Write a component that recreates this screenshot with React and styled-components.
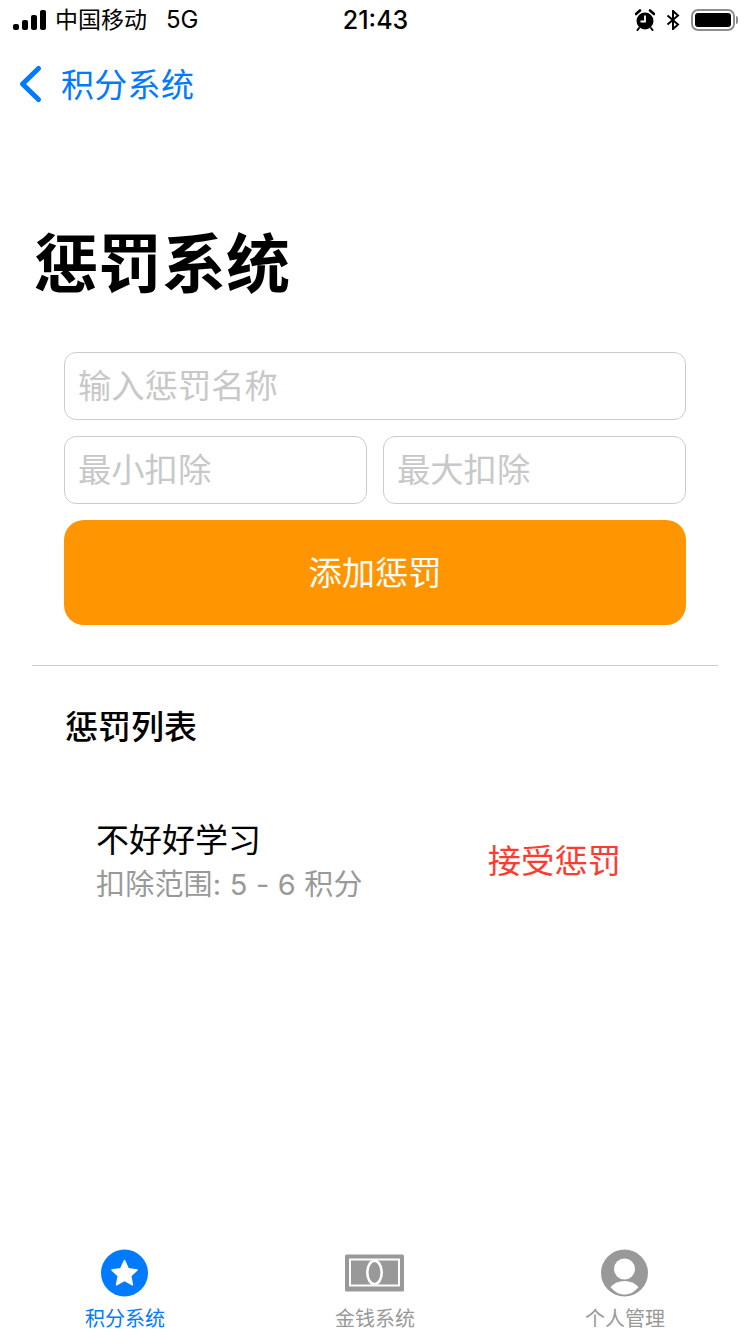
import React from 'react'
import styled, { createGlobalStyle } from 'styled-components'

const GlobalStyle = createGlobalStyle`
  html, body {
    margin: 0;
    padding: 0;
    background: #ffffff;
  }
  body {
    font-family: 'Inter', 'Noto Sans CJK SC', sans-serif;
  }
  * {
    box-sizing: border-box;
  }
`

const Page = styled.div`
  width: 750px;
  height: 1334px;
  background: #ffffff;
  display: flex;
  flex-direction: column;
  overflow: hidden;
`

const StatusBar = styled.div`
  height: 40px;
  padding: 0 12px 0 13px;
  display: grid;
  grid-template-columns: 1fr auto 1fr;
  align-items: center;
  color: #000;
`

const StatusLeft = styled.div`
  display: flex;
  align-items: center;
  font-size: 23px;
  line-height: 40px;
`

const StatusCarrier = styled.span`
  margin-left: 8px;
`

const StatusNetwork = styled.span`
  margin-left: 19px;
  font-size: 24px;
`

const StatusTime = styled.div`
  font-size: 25px;
  font-weight: 500;
`

const StatusRight = styled.div`
  display: flex;
  justify-content: flex-end;
  align-items: center;
  gap: 11px;
`

const BatteryBody = styled.div`
  width: 44px;
  height: 22px;
  border: 2px solid #8e8e8e;
  border-radius: 7px;
  padding: 2px;
`

const BatteryFill = styled.div`
  height: 100%;
  background: #000;
  border-radius: 3px;
`

const BatteryWrap = styled.div`
  display: flex;
  align-items: center;
  gap: 1px;
`

const BatteryCap = styled.div`
  width: 2px;
  height: 8px;
  background: #8e8e8e;
  border-radius: 0 2px 2px 0;
`

const NavBar = styled.div`
  height: 88px;
  padding: 0 0 0 18px;
  display: flex;
  align-items: center;
  gap: 17px;
  color: #007aff;
  font-size: 33px;
  line-height: 46px;
  letter-spacing: 0.3px;
`

const NavTitle = styled.span`
  padding-top: 2px;
`

const Title = styled.h1`
  margin: 86px 0 0 34px;
  font-size: 64px;
  line-height: 100px;
  font-weight: 700;
  color: #000;
`

const Form = styled.div`
  margin: 38px 64px 0;
  display: flex;
  flex-direction: column;
  gap: 16px;
`

const InputRow = styled.div`
  display: flex;
  gap: 16px;
`

const Input = styled.input`
  flex: 1 1 auto;
  width: 100%;
  min-width: 0;
  height: 68px;
  padding: 0 13px;
  border: 1px solid #cccccc;
  border-radius: 12px;
  background: #fff;
  font-family: inherit;
  font-size: 33.3px;
  outline: none;
  &::placeholder {
    color: #c8c8c8;
    opacity: 1;
  }
`

const AddButton = styled.button`
  height: 105px;
  padding: 0 0 5px;
  border: none;
  border-radius: 20px;
  background: #ff9500;
  color: #fff;
  font-family: inherit;
  font-size: 33.3px;
`

const Divider = styled.div`
  height: 1px;
  margin: 40px 32px 0;
  background: #cccccc;
`

const SectionTitle = styled.h2`
  margin: 36px 0 0 65px;
  font-size: 33px;
  line-height: 50px;
  font-weight: 500;
  color: #000;
`

const ListItem = styled.div`
  margin: 64px 129px 0 96px;
  display: flex;
  justify-content: space-between;
  align-items: center;
`

const ItemInfo = styled.div`
  display: flex;
  flex-direction: column;
`

const ItemName = styled.div`
  font-size: 33px;
  line-height: 49px;
  color: #000;
`

const ItemRange = styled.div`
  font-size: 29px;
  line-height: 40px;
  color: #999999;
  letter-spacing: 0.2px;
`

const AcceptButton = styled.button`
  margin-bottom: 5px;
  border: none;
  background: none;
  padding: 0;
  color: #ff3b30;
  font-family: inherit;
  font-size: 33.3px;
`

const TabBar = styled.div`
  margin-top: auto;
  height: 98px;
  display: grid;
  grid-template-columns: repeat(3, 1fr);
`

const Tab = styled.div`
  display: flex;
  flex-direction: column;
  align-items: center;
  color: ${(props) => (props.$active ? '#007aff' : '#999999')};
  font-size: 20px;
`

const TabIcon = styled.div`
  height: 48px;
  margin: 13px 0 7px;
  display: flex;
  align-items: center;
  justify-content: center;
`

const TabLabel = styled.div`
  line-height: 30px;
`

function Signal() {
  return (
    <svg width="34" height="20" viewBox="0 0 34 20" fill="#000">
      <rect x="0" y="14" width="6" height="6" rx="2" />
      <rect x="9" y="10" width="6" height="10" rx="2" />
      <rect x="18" y="5" width="6" height="15" rx="2" />
      <rect x="27" y="0" width="6" height="20" rx="2" />
    </svg>
  )
}

function Alarm() {
  return (
    <svg width="20" height="22" viewBox="0 0 20 22">
      <circle cx="10" cy="12" r="8.5" fill="#000" />
      <path d="M1 5 L5 1.5 M19 5 L15 1.5" stroke="#000" strokeWidth="2.6" strokeLinecap="round" />
      <path d="M10 6.5 V12.5 H5.5" stroke="#fff" strokeWidth="1.8" fill="none" />
      <path d="M4 19 L2.5 21 M16 19 L17.5 21" stroke="#000" strokeWidth="2" strokeLinecap="round" />
    </svg>
  )
}

function Bluetooth() {
  return (
    <svg width="14" height="20" viewBox="0 0 14 20">
      <path d="M1.5 5.5 L12 14.5 L7 19 V1 L12 5.5 L1.5 14.5" stroke="#000" strokeWidth="2" fill="none" />
    </svg>
  )
}

function BackChevron() {
  return (
    <svg width="26" height="40" viewBox="0 0 26 40">
      <path d="M20.5 4.5 L4.5 20 L20.5 35.5" stroke="#007aff" strokeWidth="5" strokeLinecap="round" strokeLinejoin="round" fill="none" />
    </svg>
  )
}

function StarTab() {
  return (
    <svg width="48" height="48" viewBox="0 0 48 48">
      <circle cx="23.5" cy="24" r="23.5" fill="#007aff" />
      <path
        d="M23.5 11.5 L27.3 19.8 L36.1 20.9 L29.7 27 L31.4 35.8 L23.5 31.4 L15.6 35.8 L17.3 27 L10.9 20.9 L19.7 19.8 Z"
        fill="#fff"
        stroke="#fff"
        strokeWidth="1.5"
        strokeLinejoin="round"
      />
    </svg>
  )
}

function MoneyTab() {
  return (
    <svg width="60" height="38" viewBox="0 0 60 38">
      <rect x="0" y="0.5" width="59" height="37" rx="1.5" fill="#999" />
      <rect x="5" y="5.5" width="49" height="26" fill="none" stroke="#fff" strokeWidth="2" />
      <ellipse cx="29.5" cy="18.5" rx="7.2" ry="11.7" fill="#999" stroke="#fff" strokeWidth="2.6" />
    </svg>
  )
}

function PersonTab() {
  return (
    <svg width="48" height="48" viewBox="0 0 48 48">
      <circle cx="23.5" cy="24" r="23.5" fill="#999" />
      <circle cx="23.5" cy="20" r="10.5" fill="#fff" />
      <path d="M9.5 38 C13 34 18 32 23.5 32 C29 32 34 34 37.5 38 C33.5 43 29 45.5 23.5 45.5 C18 45.5 13.5 43 9.5 38 Z" fill="#fff" />
    </svg>
  )
}

export default function App() {
  return (
    <Page>
      <GlobalStyle />
      <StatusBar>
        <StatusLeft>
          <Signal />
          <StatusCarrier>中国移动</StatusCarrier>
          <StatusNetwork>5G</StatusNetwork>
        </StatusLeft>
        <StatusTime>21:43</StatusTime>
        <StatusRight>
          <Alarm />
          <Bluetooth />
          <BatteryWrap>
            <BatteryBody>
              <BatteryFill />
            </BatteryBody>
            <BatteryCap />
          </BatteryWrap>
        </StatusRight>
      </StatusBar>
      <NavBar>
        <BackChevron />
        <NavTitle>积分系统</NavTitle>
      </NavBar>
      <Title>惩罚系统</Title>
      <Form>
        <Input placeholder="输入惩罚名称" />
        <InputRow>
          <Input placeholder="最小扣除" />
          <Input placeholder="最大扣除" />
        </InputRow>
        <AddButton>添加惩罚</AddButton>
      </Form>
      <Divider />
      <SectionTitle>惩罚列表</SectionTitle>
      <ListItem>
        <ItemInfo>
          <ItemName>不好好学习</ItemName>
          <ItemRange>扣除范围: 5 - 6 积分</ItemRange>
        </ItemInfo>
        <AcceptButton>接受惩罚</AcceptButton>
      </ListItem>
      <TabBar>
        <Tab $active>
          <TabIcon><StarTab /></TabIcon>
          <TabLabel>积分系统</TabLabel>
        </Tab>
        <Tab>
          <TabIcon><MoneyTab /></TabIcon>
          <TabLabel>金钱系统</TabLabel>
        </Tab>
        <Tab>
          <TabIcon><PersonTab /></TabIcon>
          <TabLabel>个人管理</TabLabel>
        </Tab>
      </TabBar>
    </Page>
  )
}
